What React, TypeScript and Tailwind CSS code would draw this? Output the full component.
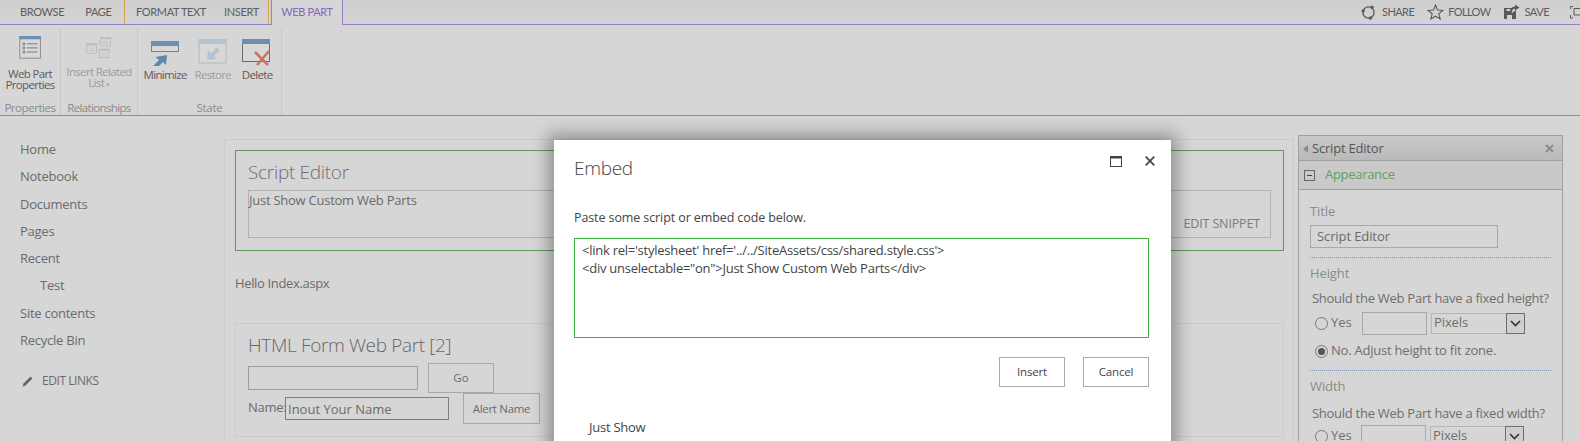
import React from "react";

const F = "font-['Open_Sans','Noto_Sans',sans-serif]";
const L = "font-['Lato','Open_Sans',sans-serif]";

function Tab({ children, cls = "tracking-[-0.35px]" }: { children: React.ReactNode; cls?: string }) {
  return <span className={`${L} whitespace-nowrap text-[11px] text-[#5d5d5d] ${cls}`}>{children}</span>;
}

function TopBar() {
  return (
    <div className="h-[25px] flex border-b border-[#9b7fc4] bg-gradient-to-b from-[#cecece] to-[#d4d4d4]">
      <div className="flex items-center pl-[20px] gap-[21px] w-[124px]">
        <Tab>BROWSE</Tab>
        <Tab>PAGE</Tab>
      </div>
      <div className="flex items-center pl-[11px] gap-[18px] w-[145px] border-x border-[#d9a24a]">
        <Tab>FORMAT TEXT</Tab>
        <Tab>INSERT</Tab>
      </div>
      <div className={`${L} ml-[2px] w-[72px] h-[25px] flex items-center justify-center bg-[#d6d6d6] border-x border-[#9b7fc4] text-[11px] tracking-[-0.35px] text-[#8a66b8] whitespace-nowrap`}>
        WEB PART
      </div>
      <div className="ml-auto flex items-center">
        <svg width="15" height="15" viewBox="0 0 15 15" className="mr-[6px]">
          <circle cx="7.5" cy="7.5" r="5.6" fill="none" stroke="#5a5a5a" strokeWidth="1.3" />
          <circle cx="2.2" cy="6" r="1.7" fill="#5a5a5a" />
          <circle cx="11" cy="2.2" r="1.7" fill="#5a5a5a" />
          <circle cx="9.5" cy="13" r="1.7" fill="#5a5a5a" />
        </svg>
        <Tab cls="mr-[13px] tracking-[-0.6px]">SHARE</Tab>
        <svg width="17" height="16" viewBox="0 0 17 16" className="mr-[4px]">
          <path d="M8.5 1 10.5 6 16 6.4 11.8 9.8 13.2 15 8.5 12.2 3.8 15 5.2 9.8 1 6.4 6.5 6Z" fill="none" stroke="#5a5a5a" strokeWidth="1.1" />
        </svg>
        <Tab cls="mr-[12px] tracking-[-0.6px]">FOLLOW</Tab>
        <svg width="17" height="16" viewBox="0 0 17 16" className="mr-[5px]">
          <path d="M1 4H9L8 6 9 9 13 6V15H1Z" fill="#5a5a5a" />
          <rect x="4" y="11" width="5" height="4" fill="#d2d2d2" />
          <rect x="3.5" y="5" width="4" height="2" fill="#d2d2d2" />
          <path d="M8 8C8 5 10 3.5 13 3.5" fill="none" stroke="#5a5a5a" strokeWidth="1.8" />
          <path d="M12 0.5 16.5 3.4 12 6.5Z" fill="#5a5a5a" />
        </svg>
        <Tab cls="mr-[21px] tracking-[-0.5px]">SAVE</Tab>
        <svg width="10" height="15" viewBox="0 0 10 15" className="block">
          <path d="M3 1.5H.5V4M.5 10V13H3" fill="none" stroke="#5a5a5a" strokeWidth="1" />
          <path d="M10 3.5H4V10H10" fill="none" stroke="#5a5a5a" strokeWidth="1" />
        </svg>
      </div>
    </div>
  );
}

function RibbonLabel({ children, dim }: { children: React.ReactNode; dim?: boolean }) {
  return (
    <div className={`text-[11.5px] tracking-[-0.65px] leading-[11px] text-center whitespace-nowrap ${dim ? "text-[#9c9c9c]" : "text-[#5b5b5b]"}`}>
      {children}
    </div>
  );
}

function Ribbon() {
  return (
    <div className="h-[91px] flex border-b border-[#9b7fc4] pt-[4px] box-border">
      <div className="w-[61px] h-[86px] flex flex-col items-center border-r border-[#c8c8c8] shrink-0">
        <svg width="27" height="28" viewBox="0 0 27 28" className="mt-[7px]">
          <rect x="0.5" y="0.5" width="25" height="26.5" fill="#d8d8d8" stroke="#7f7f7f" />
          <rect x="0" y="0" width="26" height="4" fill="#6e8fb4" />
          <circle cx="5.5" cy="9.5" r="1.3" fill="none" stroke="#666" />
          <circle cx="5.5" cy="14.5" r="1.3" fill="none" stroke="#666" />
          <circle cx="5.5" cy="19.5" r="1.3" fill="none" stroke="#666" />
          <path d="M9 9.5H22M9 14.5H22M9 19.5H22" stroke="#666" />
        </svg>
        <div className="mt-[9px]"><RibbonLabel>Web Part<br />Properties</RibbonLabel></div>
        <div className="mt-[11px] text-[11.5px] leading-[14px] tracking-[-0.45px] text-[#8a8a8a]">Properties</div>
      </div>
      <div className="w-[77px] h-[86px] flex flex-col items-center border-r border-[#c8c8c8] shrink-0">
        <svg width="32" height="29" viewBox="0 0 32 28" className="mt-[8px]">
          <path d="M12 11 18 5M12 14 18 20" stroke="#bdbdbd" fill="none" />
          <g fill="#d8d8d8" stroke="#b6b6b6">
            <rect x="0.5" y="8.5" width="12" height="12" />
            <rect x="18.5" y="0.5" width="12" height="11" />
            <rect x="16.5" y="15.5" width="12" height="11" />
          </g>
          <g fill="#b4c3d2">
            <rect x="0" y="8" width="13" height="3" />
            <rect x="18" y="0" width="13" height="3" />
            <rect x="16" y="15" width="13" height="3" />
          </g>
          <path d="M3 14H10M3 17H10M21 6H28M21 8.5H28M19 21H26M19 24H26" stroke="#bdbdbd" />
        </svg>
        <div className="mt-[7px]">
          <RibbonLabel dim>Insert Related<br />List <span className="text-[7px] text-[#aaa]">▾</span></RibbonLabel>
        </div>
        <div className="mt-[11px] text-[11.5px] leading-[14px] tracking-[-0.65px] text-[#8a8a8a]">Relationships</div>
      </div>
      <div className="w-[144px] h-[86px] flex flex-col border-r border-[#c8c8c8] shrink-0">
        <div className="flex h-[68px]">
          <div className="w-[57px] flex flex-col items-center">
            <svg width="30" height="30" viewBox="0 0 30 30" className="mt-[7px]">
              <rect x="1.5" y="5.5" width="27" height="10" fill="#d8d8d8" stroke="#7f7f7f" />
              <rect x="1" y="5" width="28" height="5" fill="#6e8fb4" />
              <path d="M3 30 9 24 5.5 21 17 19 16 29 13 26 7 32Z" fill="#5f86ad" />
            </svg>
            <div className="mt-[3px]"><RibbonLabel>Minimize</RibbonLabel></div>
          </div>
          <div className="w-[43px] flex flex-col items-center">
            <svg width="30" height="28" viewBox="0 0 30 28" className="mt-[7px]">
              <rect x="1" y="4" width="27" height="23" fill="#d8d8d8" stroke="#b6b6b6" />
              <rect x="0.5" y="3" width="28" height="5" fill="#b4c3d2" />
              <path d="M19 11 13 17 10 14 9 24 19 23 16 20 22 14Z" fill="#b4c3d2" />
            </svg>
            <div className="mt-[5px]"><RibbonLabel dim>Restore</RibbonLabel></div>
          </div>
          <div className="w-[50px] flex flex-col items-center">
            <svg width="32" height="30" viewBox="0 0 32 30" className="mt-[7px]">
              <rect x="1.5" y="3.5" width="27" height="22" fill="#d8d8d8" stroke="#6d6d6d" />
              <rect x="1" y="3" width="28" height="5" fill="#6e8fb4" />
              <path d="M14 16 27 29M28 15 16 29" stroke="#c4765e" strokeWidth="2.6" />
            </svg>
            <div className="mt-[3px]"><RibbonLabel>Delete</RibbonLabel></div>
          </div>
        </div>
        <div className="mt-[8px] text-center text-[11.5px] leading-[14px] tracking-[-0.3px] text-[#8a8a8a]">State</div>
      </div>
    </div>
  );
}

function Nav() {
  const items = ["Home", "Notebook", "Documents", "Pages", "Recent", "Test", "Site contents", "Recycle Bin"];
  return (
    <div className="w-[224px] shrink-0 pl-[20px] pt-[20px] text-[13px] tracking-[-0.25px] text-[#6b6b6b]">
      {items.map((t) => (
        <div key={t} className={`h-[27.3px] leading-[27px] ${t === "Test" ? "pl-[20px]" : ""}`}>{t}</div>
      ))}
      <div className="mt-[14px] flex items-center text-[12px] tracking-[-0.45px] h-[26px]">
        <svg width="12" height="12" viewBox="0 0 12 12" className="mr-[8px] ml-[2px]">
          <path d="M0.5 11.5 1.5 8.5 8.5 1.5 10.5 3.5 3.5 10.5Z" fill="#666" />
        </svg>
        EDIT LINKS
      </div>
    </div>
  );
}

function Main() {
  return (
    <div className="w-[1070px] shrink-0 mt-[23px] h-[320px] border border-[#cbcbcb] pt-[10px] pl-[10px] pr-[9px]">
      <div className="h-[101px] border border-[#5d9a5d] pl-[12px] pr-[12px] pt-[7px]">
        <div className="text-[19px] leading-[28px] tracking-[-0.3px] font-light text-[#6f6f6f]">Script Editor</div>
        <div className="mt-[4px] h-[48px] border border-[#b3b3b3] flex flex-col text-[13px] tracking-[-0.25px] text-[#6b6b6b]">
          <div className="leading-[18px]">Just Show Custom Web Parts</div>
          <div className="mt-[6px] self-end pr-[10px] text-[12.5px] tracking-[-0.15px] leading-[18px] text-[#7c7c7c]">EDIT SNIPPET</div>
        </div>
      </div>
      <div className="mt-[22px] h-[20px] leading-[20px] text-[13px] tracking-[-0.35px] text-[#6b6b6b]">Hello Index.aspx</div>
      <div className="mt-[30px] h-[114px] border border-[#cbcbcb] pl-[12px] pt-[6px]">
        <div className="text-[19px] leading-[30px] tracking-[-0.35px] font-light text-[#666]">HTML Form Web Part [2]</div>
        <div className="flex items-start mt-[3px]">
          <div className="w-[170px] h-[24px] mt-[3px] border border-[#9d9d9d]" />
          <div className="ml-[10px] w-[66px] h-[30px] border border-[#a8a8a8] flex items-center justify-center text-[11.5px] text-[#6b6b6b]">Go</div>
        </div>
        <div className="flex items-start">
          <span className="mt-[5px] text-[13px] leading-[18px] tracking-[-0.3px] text-[#6b6b6b] w-[37px]">Name:</span>
          <div className="mt-[4px] w-[164px] h-[23px] border border-[#7e7e7e] pl-[2px] leading-[23px] text-[13px] tracking-[0px] text-[#6b6b6b]">Inout Your Name</div>
          <div className="ml-[14px] w-[77px] h-[31px] border border-[#a8a8a8] flex items-center justify-center text-[11.5px] tracking-[-0.3px] text-[#6b6b6b]">Alert Name</div>
        </div>
      </div>
    </div>
  );
}

function Radio({ on }: { on?: boolean }) {
  return (
    <span className="w-[13px] h-[13px] rounded-full border border-[#777] flex items-center justify-center shrink-0">
      {on && <span className="w-[7px] h-[7px] rounded-full bg-[#555]" />}
    </span>
  );
}

function PixelsSelect() {
  return (
    <div className="w-[94px] h-[21px] border border-[#b5b5b5] flex items-center justify-between pl-[2px] text-[13px] tracking-[-0.1px] text-[#6e6e6e]">
      Pixels
      <span className="w-[19px] h-[21px] border border-[#6d6d6d] bg-[#cfcfcf] flex items-center justify-center mr-[-1px]">
        <svg width="11" height="7" viewBox="0 0 11 7"><path d="M1 1 5.5 5.5 10 1" fill="none" stroke="#333" strokeWidth="1.6" /></svg>
      </span>
    </div>
  );
}

function Panel() {
  return (
    <div className="ml-[4px] mt-[19px] w-[265px] h-[306px] shrink-0 border border-[#a0a0a0] border-b-0 text-[#6e6e6e]">
      <div className="h-[25px] pt-[1px] flex items-center bg-gradient-to-b from-[#c9c9c9] to-[#b9b9b9] border-b border-[#a0a0a0] pl-[4px] pr-[8px] text-[13px] tracking-[-0.2px] text-[#555]">
        <span className="w-0 h-0 border-y-[4px] border-y-transparent border-r-[5px] border-r-[#8a8a8a] mr-[4px]" />
        Script Editor
        <svg width="9" height="9" viewBox="0 0 9 9" className="ml-auto"><path d="M1 1 8 8M8 1 1 8" stroke="#8a8a8a" strokeWidth="2" /></svg>
      </div>
      <div className="h-[29px] flex items-center bg-[#c9c9c9] border-b border-[#a0a0a0] pl-[5px]">
        <span className="w-[11px] h-[11px] border border-[#666] flex items-center justify-center mr-[10px]">
          <span className="w-[5px] h-px bg-[#444]" />
        </span>
        <span className="text-[13px] tracking-[-0.3px] text-[#5f9f68]">Appearance</span>
      </div>
      <div className="pl-[11px] pr-[11px] pt-[11px]">
        <div className="text-[13px] leading-[20px] tracking-[-0.1px] text-[#8a8a8a]">Title</div>
        <div className="mt-[4px] w-[188px] h-[23px] border border-[#a8a8a8] pl-[6px] text-[13px] leading-[21px] tracking-[-0.1px] text-[#6b6b6b]">Script Editor</div>
        <div className="mt-[9px] border-t border-dotted border-[#7f8fb8] pt-[5px] text-[13px] leading-[20px] tracking-[-0.1px] text-[#8a8a8a]">Height</div>
        <div className="mt-[5px] pl-[2px] text-[13px] leading-[20px] tracking-[-0.27px] whitespace-nowrap">Should the Web Part have a fixed height?</div>
        <div className="mt-[3px] pl-[5px] flex items-center text-[13px] h-[24px]">
          <Radio />
          <span className="ml-[3px] w-[30px]">Yes</span>
          <span className="ml-[1px] w-[65px] h-[23px] border border-[#a8a8a8]" />
          <span className="ml-[4px]"><PixelsSelect /></span>
        </div>
        <div className="mt-[6px] pl-[5px] flex items-center text-[13px] h-[20px] tracking-[-0.22px] whitespace-nowrap">
          <Radio on />
          <span className="ml-[3px]">No. Adjust height to fit zone.</span>
        </div>
        <div className="mt-[9px] border-t border-dotted border-[#7f8fb8] pt-[5px] text-[13px] leading-[20px] tracking-[-0.1px] text-[#8a8a8a]">Width</div>
        <div className="mt-[7px] pl-[2px] text-[13px] leading-[20px] tracking-[-0.27px] whitespace-nowrap">Should the Web Part have a fixed width?</div>
        <div className="mt-[1px] pl-[5px] flex items-center text-[13px] h-[24px]">
          <Radio />
          <span className="ml-[3px] w-[29px]">Yes</span>
          <span className="ml-[1px] w-[65px] h-[23px] border border-[#a8a8a8]" />
          <span className="ml-[4px]"><PixelsSelect /></span>
        </div>
      </div>
    </div>
  );
}

function Dialog() {
  return (
    <div className="absolute left-[554px] top-[140px] w-[617px] h-[320px] bg-white shadow-[0_0_16px_6px_rgba(0,0,0,0.33)] pl-[20px] pr-[22px] text-[#444]">
      <div className="flex pt-[14px] h-[68px]">
        <div className="text-[19px] leading-[28px] font-light tracking-[-0.3px] text-[#444]">Embed</div>
        <svg width="12" height="11" viewBox="0 0 12 11" className="ml-auto mt-[2px] mr-[23px]">
          <rect x="0.5" y="0.5" width="11" height="10" fill="none" stroke="#444" />
          <rect x="0" y="0" width="12" height="2.5" fill="#444" />
        </svg>
        <svg width="10" height="10" viewBox="0 0 10 10" className="mt-[2px] mr-[-6px]">
          <path d="M.7.7 9.3 9.3M9.3.7.7 9.3" stroke="#444" strokeWidth="1.7" />
        </svg>
      </div>
      <div className="text-[12.5px] leading-[20px] tracking-[-0.1px]">Paste some script or embed code below.</div>
      <div className="mt-[10px] w-[575px] h-[100px] border border-[#3cb43c] pl-[7px] pt-[2px] text-[13px] leading-[18px] tracking-[-0.25px] whitespace-pre">
        {"<link rel='stylesheet' href='../../SiteAssets/css/shared.style.css'>\n<div unselectable=\"on\">Just Show Custom Web Parts</div>"}
      </div>
      <div className="mt-[19px] w-[575px] flex justify-end gap-[18px]">
        <div className="w-[66px] h-[30px] border border-[#ababab] flex items-center justify-center text-[11.5px] tracking-[-0.2px]">Insert</div>
        <div className="w-[66px] h-[30px] border border-[#ababab] flex items-center justify-center text-[11.5px] tracking-[-0.2px]">Cancel</div>
      </div>
      <div className="mt-[30px] pl-[15px] text-[13px] leading-[20px] tracking-[-0.25px]">Just Show</div>
    </div>
  );
}

export default function App() {
  return (
    <div className={`relative w-[1580px] h-[441px] overflow-hidden bg-[#d6d6d6] ${F}`}>
      <TopBar />
      <Ribbon />
      <div className="flex">
        <Nav />
        <Main />
        <Panel />
      </div>
      <Dialog />
    </div>
  );
}
